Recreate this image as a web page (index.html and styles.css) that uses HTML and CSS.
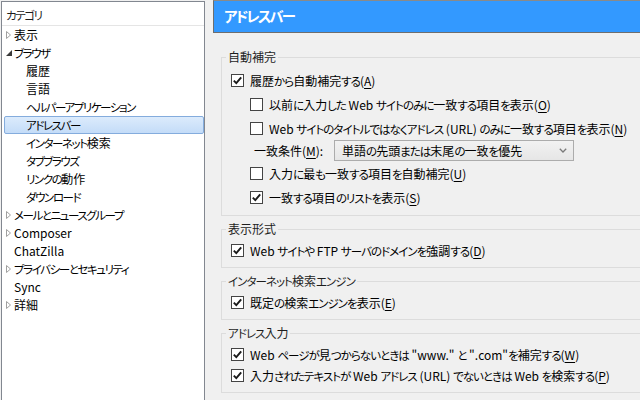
FILE: index.html
```html
<!DOCTYPE html>
<html lang="ja">
<head>
<meta charset="utf-8">
<title>設定 - アドレスバー</title>
<link rel="stylesheet" href="styles.css">
</head>
<body>
<div class="window">
  <aside class="tree">
    <div class="tree-head"><span class="k">カテゴリ</span></div>
    <ul class="tree-list">
      <li class="node"><span class="twisty"><svg width="5" height="8" viewBox="0 0 5 8"><path d="M0.5 0.5 L4.5 4 L0.5 7.5 Z" fill="none" stroke="#a0a0a0"/></svg></span><span class="text">表示</span></li>
      <li class="node"><span class="twisty"><svg width="6" height="6" viewBox="0 0 6 6"><path d="M6 0 L6 6 L0 6 Z" fill="#3a3a3a"/></svg></span><span class="text"><span class="k">ブラウザ</span></span></li>
      <li class="node child"><span class="text">履歴</span></li>
      <li class="node child"><span class="text">言語</span></li>
      <li class="node child"><span class="text"><span class="k">ヘルパーアプリケーション</span></span></li>
      <li class="node child selected"><span class="text"><span class="k">アドレスバー</span></span></li>
      <li class="node child"><span class="text"><span class="k">インターネット</span>検索</span></li>
      <li class="node child"><span class="text"><span class="k">タブブラウズ</span></span></li>
      <li class="node child"><span class="text"><span class="k">リンクの</span>動作</span></li>
      <li class="node child"><span class="text"><span class="k">ダウンロード</span></span></li>
      <li class="node"><span class="twisty"><svg width="5" height="8" viewBox="0 0 5 8"><path d="M0.5 0.5 L4.5 4 L0.5 7.5 Z" fill="none" stroke="#a0a0a0"/></svg></span><span class="text"><span class="k">メールとニュースグループ</span></span></li>
      <li class="node"><span class="twisty"><svg width="5" height="8" viewBox="0 0 5 8"><path d="M0.5 0.5 L4.5 4 L0.5 7.5 Z" fill="none" stroke="#a0a0a0"/></svg></span><span class="text">Composer</span></li>
      <li class="node"><span class="twisty"></span><span class="text">ChatZilla</span></li>
      <li class="node"><span class="twisty"><svg width="5" height="8" viewBox="0 0 5 8"><path d="M0.5 0.5 L4.5 4 L0.5 7.5 Z" fill="none" stroke="#a0a0a0"/></svg></span><span class="text"><span class="k">プライバシーとセキュリティ</span></span></li>
      <li class="node"><span class="twisty"></span><span class="text">Sync</span></li>
      <li class="node"><span class="twisty"><svg width="5" height="8" viewBox="0 0 5 8"><path d="M0.5 0.5 L4.5 4 L0.5 7.5 Z" fill="none" stroke="#a0a0a0"/></svg></span><span class="text">詳細</span></li>
    </ul>
  </aside>

  <main class="pane">
    <header class="pane-head"><span class="k">アドレスバー</span></header>
    <div class="groups">
      <fieldset class="group tall">
        <legend>自動補完</legend>
        <div class="row"><span class="box"><svg width="11" height="11" viewBox="0 0 11 11"><polyline points="1.8,5.6 4.3,8.2 9.2,2.4" fill="none" stroke="#1a1a1a" stroke-width="1.9"/></svg></span><span class="text">履歴<span class="k">から</span>自動補完<span class="k">する</span>(<u>A</u>)</span></div>
        <div class="row sub"><span class="box"></span><span class="text">以前<span class="k">に</span>入力<span class="k">した</span> Web <span class="k">サイトのみに</span>一致<span class="k">する</span>項目<span class="k">を</span>表示(<u>O</u>)</span></div>
        <div class="row sub"><span class="box"></span><span class="text">Web <span class="k">サイトのタイトルではなくアドレス</span> (URL) <span class="k">のみに</span>一致<span class="k">する</span>項目<span class="k">を</span>表示(<u>N</u>)</span></div>
        <div class="row field">
          <span class="field-label">一致条件(<u>M</u>):</span>
          <div class="combo"><span class="combo-text">単語<span class="k">の</span>先頭<span class="k">または</span>末尾<span class="k">の</span>一致<span class="k">を</span>優先</span><svg width="8" height="5" viewBox="0 0 8 5"><polyline points="0.8,0.8 4,4 7.2,0.8" fill="none" stroke="#7a7a7a" stroke-width="1.3"/></svg></div>
        </div>
        <div class="row sub"><span class="box"></span><span class="text">入力<span class="k">に</span>最<span class="k">も</span>一致<span class="k">する</span>項目<span class="k">を</span>自動補完(<u>U</u>)</span></div>
        <div class="row sub"><span class="box"><svg width="11" height="11" viewBox="0 0 11 11"><polyline points="1.8,5.6 4.3,8.2 9.2,2.4" fill="none" stroke="#1a1a1a" stroke-width="1.9"/></svg></span><span class="text">一致<span class="k">する</span>項目<span class="k">のリストを</span>表示(<u>S</u>)</span></div>
      </fieldset>

      <fieldset class="group">
        <legend>表示形式</legend>
        <div class="row"><span class="box"><svg width="11" height="11" viewBox="0 0 11 11"><polyline points="1.8,5.6 4.3,8.2 9.2,2.4" fill="none" stroke="#1a1a1a" stroke-width="1.9"/></svg></span><span class="text">Web <span class="k">サイトや</span> FTP <span class="k">サーバのドメインを</span>強調<span class="k">する</span>(<u>D</u>)</span></div>
      </fieldset>

      <fieldset class="group">
        <legend><span class="k">インターネット</span>検索<span class="k">エンジン</span></legend>
        <div class="row"><span class="box"><svg width="11" height="11" viewBox="0 0 11 11"><polyline points="1.8,5.6 4.3,8.2 9.2,2.4" fill="none" stroke="#1a1a1a" stroke-width="1.9"/></svg></span><span class="text">既定<span class="k">の</span>検索<span class="k">エンジンを</span>表示(<u>E</u>)</span></div>
      </fieldset>

      <fieldset class="group">
        <legend><span class="k">アドレス</span>入力</legend>
        <div class="row"><span class="box"><svg width="11" height="11" viewBox="0 0 11 11"><polyline points="1.8,5.6 4.3,8.2 9.2,2.4" fill="none" stroke="#1a1a1a" stroke-width="1.9"/></svg></span><span class="text">Web <span class="k">ページが</span>見<span class="k">つからないときは</span> "www." <span class="k">と</span> ".com"<span class="k">を</span>補完<span class="k">する</span>(<u>W</u>)</span></div>
        <div class="row"><span class="box"><svg width="11" height="11" viewBox="0 0 11 11"><polyline points="1.8,5.6 4.3,8.2 9.2,2.4" fill="none" stroke="#1a1a1a" stroke-width="1.9"/></svg></span><span class="text">入力<span class="k">されたテキストが</span> Web <span class="k">アドレス</span> (URL) <span class="k">でないときは</span> Web <span class="k">を</span>検索<span class="k">する</span>(<u>P</u>)</span></div>
      </fieldset>
    </div>
  </main>
</div>
</body>
</html>
```

FILE: styles.css
```css
html, body {
  margin: 0;
  padding: 0;
}

body {
  width: 640px;
  height: 400px;
  overflow: hidden;
  background: #f0f0f0;
  color: #000;
  font-family: "Noto Sans CJK JP", "Noto Sans", sans-serif;
  font-size: 12px;
  font-feature-settings: "palt";
}

/* kana runs: narrower, like the UI font of the original */
.k {
  font-size: 0.96em;
  letter-spacing: -0.085em;
}

.text {
  white-space: pre;
}

.window {
  display: flex;
  align-items: flex-start;
  height: 400px;
}

/* ---------- category tree ---------- */
.tree {
  flex: 0 0 204px;
  box-sizing: border-box;
  height: 420px;
  margin: 1px 0 0 1px;
  border: 1px solid #828790;
  background: #fff;
}

.tree .k {
  letter-spacing: -0.125em;
}

.tree-head {
  height: 23px;
  line-height: 25px;
  padding-left: 4px;
  border-bottom: 1px solid #e5e5e5;
  color: #1e1e1e;
}

.tree-list {
  list-style: none;
  margin: 0;
  padding: 0;
}

.node {
  display: flex;
  align-items: center;
  box-sizing: border-box;
  height: 18px;
  margin-left: 2px;
  padding-left: 1px;
  border: 1px solid transparent;
  border-radius: 2px;
  line-height: 16px;
  white-space: nowrap;
}

.node.child {
  padding-left: 21px;
}

.node.selected {
  border-color: #84acdd;
  background: linear-gradient(#dcebfc, #c4dcf8);
}

.twisty {
  display: flex;
  align-items: center;
  justify-content: flex-start;
  width: 8px;
  height: 16px;
}

/* ---------- right pane ---------- */
.pane {
  flex: 0 0 440px;
  margin-left: 8px;
}

.pane-head {
  box-sizing: border-box;
  height: 33px;
  padding-left: 10px;
  border: 1px solid #6e6e6e;
  border-top-color: #8a8a8a;
  background: #3399ff;
  color: #fff;
  font-size: 15px;
  font-weight: bold;
  line-height: 30px;
}

.pane-head .k {
  letter-spacing: -0.13em;
}

.groups {
  display: flex;
  flex-direction: column;
  gap: 6px;
  padding: 17px 0 0 8px;
}

.group {
  min-width: 0;
  margin: 0;
  padding: 4px 0 6px 0;
  border: 1px solid #dcdcdc;
}

.group legend {
  margin-left: 4px;
  padding: 0 2px;
  line-height: 14px;
  color: #1e1e1e;
}

.row {
  display: flex;
  align-items: center;
  height: 21px;
  padding-left: 9px;
  white-space: nowrap;
}

.group.tall .row {
  height: 24px;
}

.row.sub {
  padding-left: 28px;
}

.group.tall .row.field {
  height: 21px;
  padding-left: 32px;
}

.box {
  display: flex;
  align-items: center;
  justify-content: center;
  box-sizing: border-box;
  flex: 0 0 13px;
  width: 13px;
  height: 13px;
  margin-right: 6px;
  border: 1px solid #444;
  background: #fff;
}

u {
  text-decoration-thickness: 1px;
  text-underline-offset: 2px;
}

.field-label {
  flex: 0 0 80px;
}

.combo {
  display: flex;
  align-items: center;
  justify-content: space-between;
  box-sizing: border-box;
  width: 240px;
  height: 21px;
  padding: 0 6px 0 7px;
  border: 1px solid #acacac;
  background: linear-gradient(#f2f2f2, #e6e6e6);
}
```
